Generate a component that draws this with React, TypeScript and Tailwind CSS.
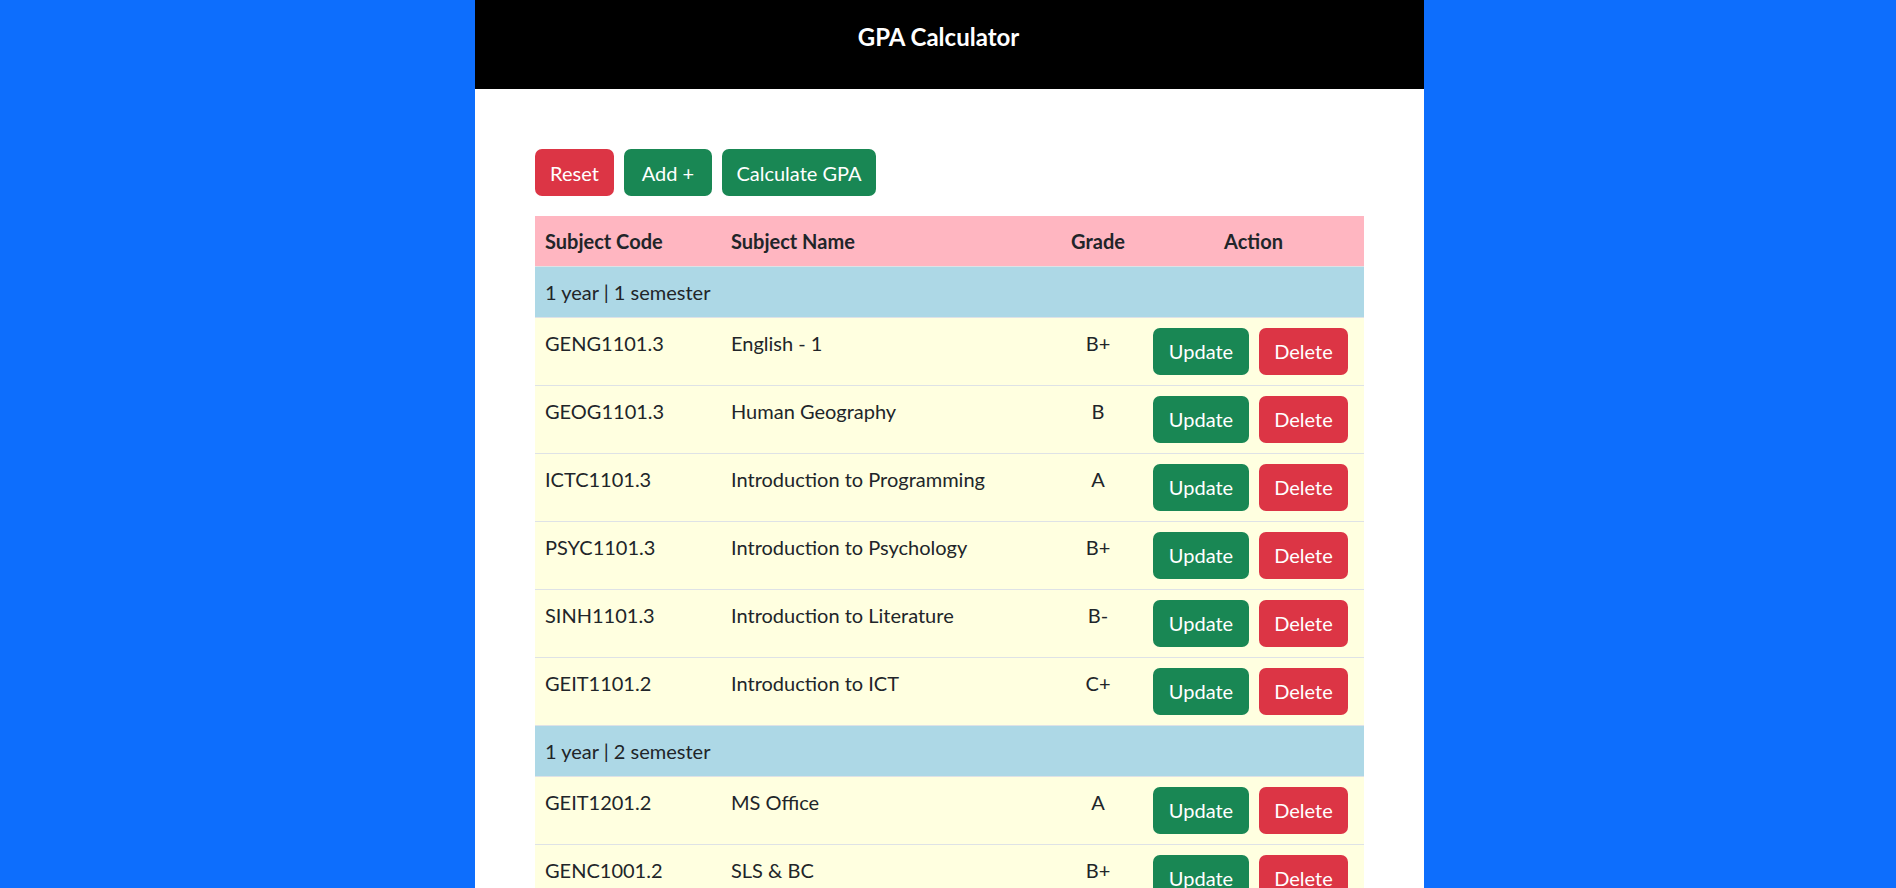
import React from "react";

type Subject = { code: string; name: string; grade: string };
type Semester = { label: string; subjects: Subject[] };

const semesters: Semester[] = [
  {
    label: "1 year | 1 semester",
    subjects: [
      { code: "GENG1101.3", name: "English - 1", grade: "B+" },
      { code: "GEOG1101.3", name: "Human Geography", grade: "B" },
      { code: "ICTC1101.3", name: "Introduction to Programming", grade: "A" },
      { code: "PSYC1101.3", name: "Introduction to Psychology", grade: "B+" },
      { code: "SINH1101.3", name: "Introduction to Literature", grade: "B-" },
      { code: "GEIT1101.2", name: "Introduction to ICT", grade: "C+" },
    ],
  },
  {
    label: "1 year | 2 semester",
    subjects: [
      { code: "GEIT1201.2", name: "MS Office", grade: "A" },
      { code: "GENC1001.2", name: "SLS & BC", grade: "B+" },
      { code: "GEOG1201.3", name: "Physical Geography", grade: "B" },
    ],
  },
];

const font = { fontFamily: 'Lato, "Noto Sans", sans-serif' };

const App: React.FC = () => {
  return (
    <div className="flex min-h-screen justify-center bg-[#0d6efd] pl-[3px]" style={font}>
      <div className="min-h-screen w-[949px] bg-white text-[20px] leading-[30px] text-[#212529]">
        <header className="h-[89px] bg-black pr-[22px] pt-[22px] text-center">
          <h1 className="text-[24px] font-bold leading-[30px] text-white">
            GPA Calculator
          </h1>
        </header>

        <main className="p-[60px]">
          <div className="flex gap-[10px]">
            <button className="h-[47px] w-[79px] rounded-[7px] bg-[#dc3545] text-white">
              Reset
            </button>
            <button className="h-[47px] w-[88px] rounded-[7px] bg-[#198754] text-white">
              Add +
            </button>
            <button className="h-[47px] w-[154px] rounded-[7px] bg-[#198754] text-white">
              Calculate GPA
            </button>
          </div>

          <table className="mt-[20px] w-[829px] table-fixed border-collapse text-left">
            <colgroup>
              <col className="w-[186px]" />
              <col className="w-[332px]" />
              <col className="w-[90px]" />
              <col className="w-[221px]" />
            </colgroup>
            <thead>
              <tr className="border-b border-[#dee2e6] bg-[#ffb6c1]">
                <th className="h-[50px] px-[10px] font-bold">Subject Code</th>
                <th className="px-[10px] font-bold">Subject Name</th>
                <th className="px-[10px] text-center font-bold">Grade</th>
                <th className="px-[10px] text-center font-bold">Action</th>
              </tr>
            </thead>
            <tbody>
              {semesters.map((sem) => (
                <React.Fragment key={sem.label}>
                  <tr className="border-b border-[#dee2e6] bg-[#add8e6]">
                    <td colSpan={4} className="h-[51px] px-[10px]">
                      {sem.label}
                    </td>
                  </tr>
                  {sem.subjects.map((s) => (
                    <tr
                      key={s.code}
                      className="border-b border-[#dee2e6] bg-[#ffffe0] align-top"
                    >
                      <td className="p-[10px]">{s.code}</td>
                      <td className="p-[10px]">{s.name}</td>
                      <td className="p-[10px] text-center">{s.grade}</td>
                      <td className="p-[10px]">
                        <div className="flex gap-[10px]">
                          <button className="h-[47px] w-[96px] rounded-[7px] bg-[#198754] text-white">
                            Update
                          </button>
                          <button className="h-[47px] w-[89px] rounded-[7px] bg-[#dc3545] text-white">
                            Delete
                          </button>
                        </div>
                      </td>
                    </tr>
                  ))}
                </React.Fragment>
              ))}
            </tbody>
          </table>
        </main>
      </div>
    </div>
  );
};

export default App;
